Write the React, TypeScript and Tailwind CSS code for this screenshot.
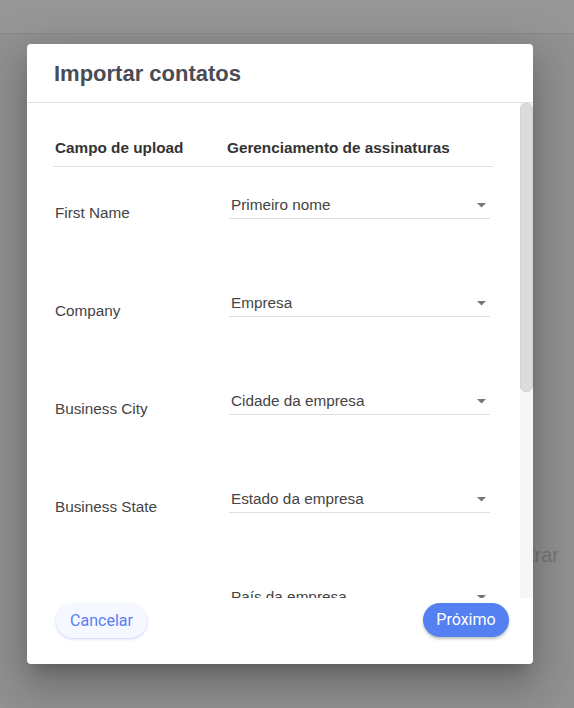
import React from "react";

const mappings = [
  { field: "First Name", value: "Primeiro nome" },
  { field: "Company", value: "Empresa" },
  { field: "Business City", value: "Cidade da empresa" },
  { field: "Business State", value: "Estado da empresa" },
  { field: "Business Country", value: "País da empresa" },
  { field: "E-mail Address", value: "E-mail" },
  { field: "Mobile Phone", value: "Celular" },
  { field: "Last Name", value: "Sobrenome" },
];

const SelectField = ({ value }: { value: string }) => (
  <div className="mt-[29px] ml-[2px] mr-[3px] flex items-center justify-between border-b border-[#dedede] pb-[4px] pl-[2px]">
    <span className="text-[15.3px] leading-[18px] text-[#444]">{value}</span>
    <svg width="9" height="5" viewBox="0 0 9 5" className="mr-[4px]">
      <path d="M0 0h9L4.5 4.5z" fill="#777" />
    </svg>
  </div>
);

const App = () => {
  return (
    <div
      className="relative h-[708px] w-[574px] overflow-hidden bg-[#919191]"
      style={{ fontFamily: '"Liberation Sans", Arial, sans-serif' }}
    >
      {/* page behind the overlay */}
      <div className="h-[34px] border-b border-[#8a8a8a] bg-[#969696]" />
      <div className="flex justify-end pr-[15px] pt-[506px]">
        <span className="text-[20px] text-[#777]">Cadastrar</span>
      </div>

      {/* dialog */}
      <div className="absolute left-[27px] top-[44px] flex h-[620px] w-[506px] flex-col overflow-hidden rounded-[4px] bg-white shadow-[0_11px_15px_-7px_rgba(0,0,0,0.2),0_24px_38px_3px_rgba(0,0,0,0.14),0_9px_46px_8px_rgba(0,0,0,0.12)]">
        <div className="flex h-[59px] items-center border-b border-[#e0e0e0] pl-[27px]">
          <h2 className="text-[22px] font-bold text-[#4a4b55]">
            Importar contatos
          </h2>
        </div>

        <div className="flex h-[495px]">
          <div className="flex-1 overflow-hidden pl-[26px] pr-[27px] pt-[25px]">
            <div className="flex h-[39px] items-start border-b border-[#e0e0e0] pt-[11px] text-[15.3px] font-bold leading-[18px] text-[#333]">
              <div className="w-[174px] pl-[2px]">Campo de upload</div>
              <div>Gerenciamento de assinaturas</div>
            </div>
            {mappings.map((m) => (
              <div key={m.field} className="flex h-[98px] shrink-0 items-start">
                <div className="mt-[37px] w-[174px] pl-[2px] text-[15.3px] leading-[18px] text-[#444]">
                  {m.field}
                </div>
                <div className="flex-1">
                  <SelectField value={m.value} />
                </div>
              </div>
            ))}
          </div>
          {/* scrollbar */}
          <div className="w-[13px] bg-[#f6f6f6]">
            <div className="h-[289px] rounded-[6px] border border-[#d2d2d2] bg-[#dcdcdc]" />
          </div>
        </div>

        <div
          className="flex flex-1 items-start justify-between pl-[29px] pr-[24px] pt-[5px]"
          style={{ fontFamily: "Roboto, Arial, sans-serif" }}
        >
          <button className="mt-[1px] h-[34px] w-[91px] rounded-full bg-[#f5f8ff] text-[16px] text-[#5a7ff0] shadow-[0_1px_3px_rgba(90,127,240,0.35)]">
            Cancelar
          </button>
          <button className="h-[34px] w-[86px] rounded-full bg-[#5580f1] text-[16px] text-white shadow-[0_2px_3px_rgba(0,0,0,0.25)]">
            Próximo
          </button>
        </div>
      </div>
    </div>
  );
};

export default App;
